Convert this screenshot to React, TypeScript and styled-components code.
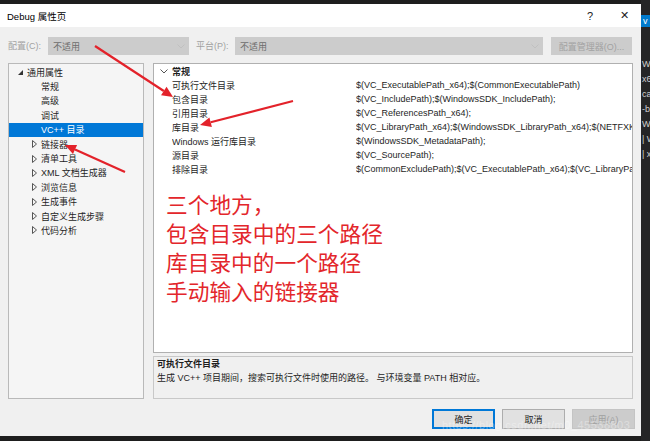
import React from "react";
import styled, { createGlobalStyle } from "styled-components";

const Global = createGlobalStyle`
  html, body { margin: 0; padding: 0; background: #1e1e1e; }
  body { font-family: "Liberation Sans", "Noto Sans CJK SC", sans-serif; }
  * { box-sizing: border-box; }
`;

const Screen = styled.div`
  position: relative;
  width: 650px;
  height: 441px;
  overflow: hidden;
  display: flex;
  background: #1e1e1e;
`;

const Dialog = styled.div`
  width: 641px;
  height: 432px;
  margin-top: 4px;
  background: #f0f0f0;
  display: flex;
  flex-direction: column;
  font-size: 9px;
  color: #1e1e1e;
`;

const TitleBar = styled.div`
  height: 23px;
  background: #ffffff;
  display: flex;
  align-items: center;
  padding-left: 7px;
  font-size: 9.5px;
  color: #000;
`;

const TitleText = styled.span`
  flex: 1;
`;

const TitleButton = styled.div`
  width: 34px;
  height: 23px;
  display: flex;
  align-items: center;
  justify-content: center;
  color: #222;
  font-size: 11px;
`;

const ConfigRow = styled.div`
  height: 36px;
  padding: 10px 0 0 8px;
  display: flex;
  align-items: flex-start;
`;

const ConfigLabel = styled.div<{ $w: number; $ml?: number }>`
  width: ${(p) => p.$w}px;
  margin-left: ${(p) => p.$ml ?? 0}px;
  height: 18px;
  line-height: 18px;
  color: #a2a2a2;
`;

const Combo = styled.div<{ $w: number }>`
  width: ${(p) => p.$w}px;
  height: 18px;
  background: #cccccc;
  color: #6d6d6d;
  display: flex;
  align-items: center;
  padding: 0 4px 0 5px;
`;

const ComboText = styled.span`
  flex: 1;
`;

const ManagerButton = styled.div`
  width: 81px;
  height: 18px;
  margin-left: 8px;
  background: #cccccc;
  color: #a2a2a2;
  display: flex;
  align-items: center;
  justify-content: center;
`;

const Main = styled.div`
  height: 336px;
  padding: 0 8px;
  display: flex;
  gap: 9px;
`;

const TreePanel = styled.div`
  width: 136px;
  height: 100%;
  background: #f5f5f5;
  border: 1px solid #b9b9b9;
  padding-top: 1px;
`;

const TreeRow = styled.div<{ $depth: number; $selected?: boolean }>`
  height: 14.4px;
  display: flex;
  align-items: center;
  gap: 4px;
  padding-left: ${(p) => (p.$depth === 0 ? 8 : 22)}px;
  background: ${(p) => (p.$selected ? "#0078d7" : "transparent")};
  color: ${(p) => (p.$selected ? "#ffffff" : "#1e1e1e")};
`;

const TreeIcon = styled.span`
  width: 6px;
  height: 8px;
  display: flex;
  align-items: center;
  justify-content: center;
`;

const RightColumn = styled.div`
  flex: 1;
  display: flex;
  flex-direction: column;
  gap: 3px;
`;

const Grid = styled.div`
  height: 290px;
  background: #ffffff;
  border: 1px solid #b0b0b0;
  overflow: hidden;
`;

const GridRow = styled.div`
  height: 14px;
  display: grid;
  grid-template-columns: 18px 184px 1fr;
  align-items: center;
  white-space: nowrap;
`;

const Gutter = styled.span`
  display: flex;
  align-items: center;
  justify-content: center;
  padding-left: 1px;
`;

const CategoryName = styled.span`
  font-weight: bold;
`;

const Cell = styled.span`
  overflow: hidden;
`;

const Description = styled.div`
  height: 43px;
  border: 1px solid #c8c8c8;
  background: #f0f0f0;
  padding: 0 3px;
  line-height: 14px;
`;

const DescTitle = styled.div`
  font-weight: bold;
`;

const Footer = styled.div`
  flex: 1;
  display: flex;
  justify-content: flex-end;
  align-items: flex-start;
  padding: 10px 6px 0 0;
  gap: 7px;
`;

const Button = styled.div<{ $variant?: "primary" | "disabled" }>`
  width: 63px;
  height: 20px;
  display: flex;
  align-items: center;
  justify-content: center;
  background: ${(p) => (p.$variant === "disabled" ? "#cccccc" : "#e1e1e1")};
  color: ${(p) => (p.$variant === "disabled" ? "#a0a0a0" : "#1e1e1e")};
  border: ${(p) =>
    p.$variant === "primary"
      ? "2px solid #0078d7"
      : p.$variant === "disabled"
      ? "1px solid #c4c4c4"
      : "1px solid #adadad"};
`;

const SideStrip = styled.div`
  width: 9px;
  height: 100%;
  background: #252526;
  display: flex;
  flex-direction: column;
  padding-top: 15px;
  overflow: hidden;
  font-size: 9px;
  color: #d0d0d0;
  white-space: nowrap;
`;

const SideTab = styled.div`
  height: 12px;
  background: #007acc;
  color: #ffffff;
  line-height: 12px;
  padding-left: 2px;
  margin-bottom: 30px;
`;

const SideLine = styled.div`
  height: 15px;
  line-height: 15px;
  padding-left: 1px;
`;

const Annotation = styled.div`
  position: absolute;
  left: 166px;
  top: 189px;
  font-family: "Noto Sans CJK SC", sans-serif;
  font-size: 21.7px;
  line-height: 29px;
  color: #e3262b;
  pointer-events: none;
`;

const Watermark = styled.div`
  position: absolute;
  left: 442px;
  top: 419px;
  font-size: 11px;
  color: rgba(255, 255, 255, 0.35);
  letter-spacing: 0.5px;
  pointer-events: none;
`;

const Overlay = styled.svg`
  position: absolute;
  left: 0;
  top: 0;
  pointer-events: none;
`;

const Chevron = ({ color = "#c0c0c0" }: { color?: string }) => (
  <svg width="8" height="5" viewBox="0 0 8 5">
    <path d="M0.5 0.5 L4 4 L7.5 0.5" fill="none" stroke={color} strokeWidth="1" />
  </svg>
);

const Expanded = () => (
  <svg width="5" height="5" viewBox="0 0 5 5">
    <path d="M5 0 L5 5 L0 5 Z" fill="#333" />
  </svg>
);

const Collapsed = () => (
  <svg width="5" height="8" viewBox="0 0 5 8">
    <path d="M0.5 0.5 L4.5 4 L0.5 7.5 Z" fill="none" stroke="#555" strokeWidth="1" />
  </svg>
);

type Pt = [number, number];
const Arrow = ({ from, to }: { from: Pt; to: Pt }) => {
  const dx = to[0] - from[0];
  const dy = to[1] - from[1];
  const len = Math.hypot(dx, dy);
  const ux = dx / len;
  const uy = dy / len;
  const hl = 11;
  const hw = 5;
  const bx = to[0] - ux * hl;
  const by = to[1] - uy * hl;
  const p1 = `${bx - uy * hw},${by + ux * hw}`;
  const p2 = `${bx + uy * hw},${by - ux * hw}`;
  return (
    <g>
      <line x1={from[0]} y1={from[1]} x2={bx} y2={by} stroke="#e3222a" strokeWidth="2.2" />
      <polygon points={`${to[0]},${to[1]} ${p1} ${p2}`} fill="#e3222a" />
    </g>
  );
};

const tree: { label: string; depth: number; kind: "exp" | "col" | "leaf"; selected?: boolean }[] = [
  { label: "通用属性", depth: 0, kind: "exp" },
  { label: "常规", depth: 1, kind: "leaf" },
  { label: "高级", depth: 1, kind: "leaf" },
  { label: "调试", depth: 1, kind: "leaf" },
  { label: "VC++ 目录", depth: 1, kind: "leaf", selected: true },
  { label: "链接器", depth: 1, kind: "col" },
  { label: "清单工具", depth: 1, kind: "col" },
  { label: "XML 文档生成器", depth: 1, kind: "col" },
  { label: "浏览信息", depth: 1, kind: "col" },
  { label: "生成事件", depth: 1, kind: "col" },
  { label: "自定义生成步骤", depth: 1, kind: "col" },
  { label: "代码分析", depth: 1, kind: "col" },
];

const props: [string, string][] = [
  ["可执行文件目录", "$(VC_ExecutablePath_x64);$(CommonExecutablePath)"],
  ["包含目录", "$(VC_IncludePath);$(WindowsSDK_IncludePath);"],
  ["引用目录", "$(VC_ReferencesPath_x64);"],
  ["库目录", "$(VC_LibraryPath_x64);$(WindowsSDK_LibraryPath_x64);$(NETFXKitsDir)Lib\\um\\x64"],
  ["Windows 运行库目录", "$(WindowsSDK_MetadataPath);"],
  ["源目录", "$(VC_SourcePath);"],
  ["排除目录", "$(CommonExcludePath);$(VC_ExecutablePath_x64);$(VC_LibraryPath_x64)"],
];

export default function App() {
  return (
    <>
      <Global />
      <Screen>
        <Dialog>
          <TitleBar>
            <TitleText>Debug 属性页</TitleText>
            <TitleButton>?</TitleButton>
            <TitleButton>✕</TitleButton>
          </TitleBar>
          <ConfigRow>
            <ConfigLabel $w={40}>配置(C):</ConfigLabel>
            <Combo $w={141}>
              <ComboText>不适用</ComboText>
              <Chevron />
            </Combo>
            <ConfigLabel $w={39} $ml={7}>平台(P):</ConfigLabel>
            <Combo $w={308}>
              <ComboText>不适用</ComboText>
              <Chevron />
            </Combo>
            <ManagerButton>配置管理器(O)...</ManagerButton>
          </ConfigRow>
          <Main>
            <TreePanel>
              {tree.map((t) => (
                <TreeRow key={t.label} $depth={t.depth} $selected={t.selected}>
                  <TreeIcon>
                    {t.kind === "exp" ? <Expanded /> : t.kind === "col" ? <Collapsed /> : null}
                  </TreeIcon>
                  <span>{t.label}</span>
                </TreeRow>
              ))}
            </TreePanel>
            <RightColumn>
              <Grid>
                <GridRow>
                  <Gutter>
                    <Chevron color="#555" />
                  </Gutter>
                  <CategoryName>常规</CategoryName>
                  <span />
                </GridRow>
                {props.map(([n, v]) => (
                  <GridRow key={n}>
                    <span />
                    <Cell>{n}</Cell>
                    <Cell>{v}</Cell>
                  </GridRow>
                ))}
              </Grid>
              <Description>
                <DescTitle>可执行文件目录</DescTitle>
                <div>生成 VC++ 项目期间，搜索可执行文件时使用的路径。 与环境变量 PATH 相对应。</div>
              </Description>
            </RightColumn>
          </Main>
          <Footer>
            <Button $variant="primary">确定</Button>
            <Button>取消</Button>
            <Button $variant="disabled">应用(A)</Button>
          </Footer>
        </Dialog>
        <SideStrip>
          <SideTab>v</SideTab>
          <SideLine>W</SideLine>
          <SideLine>x6</SideLine>
          <SideLine>ca</SideLine>
          <SideLine>-b</SideLine>
          <SideLine>W</SideLine>
          <SideLine>| W</SideLine>
          <SideLine>| x</SideLine>
        </SideStrip>
        <Annotation>
          三个地方，
          <br />
          包含目录中的三个路径
          <br />
          库目录中的一个路径
          <br />
          手动输入的链接器
        </Annotation>
        <Watermark>https://blog.csdn.net/m0_45538803</Watermark>
        <Overlay width="650" height="441" viewBox="0 0 650 441">
          <Arrow from={[95, 46]} to={[173, 97]} />
          <Arrow from={[293, 101]} to={[200, 125]} />
          <Arrow from={[125, 172]} to={[65, 145]} />
        </Overlay>
      </Screen>
    </>
  );
}
